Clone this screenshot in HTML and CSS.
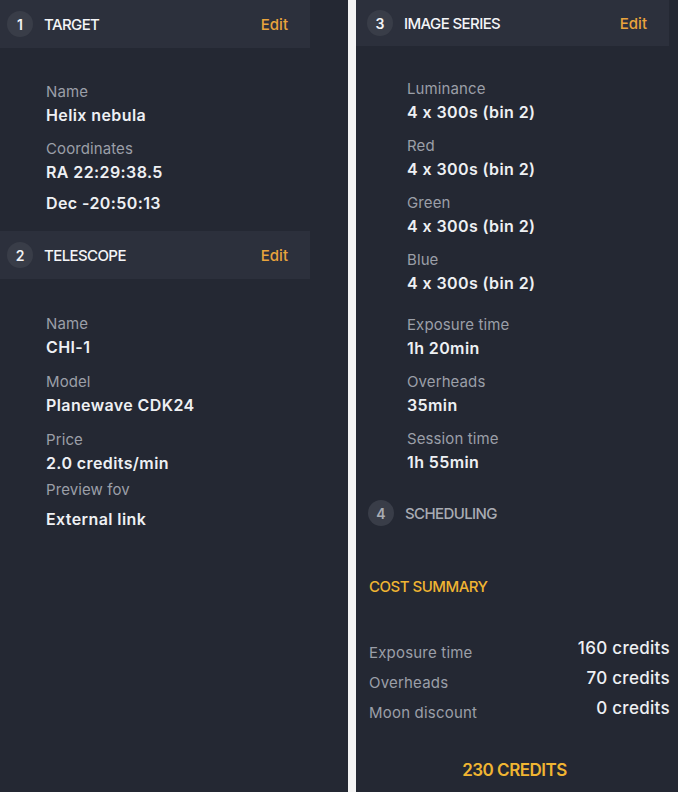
FILE: index.html
```html
<!DOCTYPE html>
<html lang="en">
<head>
  <meta charset="UTF-8" />
  <meta name="viewport" content="width=device-width, initial-scale=1.0"/>
  <title>Observation Request</title>
  <link rel="stylesheet" href="styles.css">
</head>
<body>
  <main class="layout">

    <!-- Left column: target + telescope -->
    <section class="panel">
      <div class="step">
        <header class="step-head">
          <span class="step-num">1</span>
          <span class="step-title">TARGET</span>
          <a class="step-edit" href="#">Edit</a>
        </header>
        <div class="fields">
          <div class="field">
            <div class="label">Name</div>
            <div class="value">Helix nebula</div>
          </div>
          <div class="field">
            <div class="label">Coordinates</div>
            <div class="value">RA 22:29:38.5</div>
            <div class="value value-next">Dec -20:50:13</div>
          </div>
        </div>
      </div>

      <div class="step step-second">
        <header class="step-head">
          <span class="step-num">2</span>
          <span class="step-title">TELESCOPE</span>
          <a class="step-edit" href="#">Edit</a>
        </header>
        <div class="fields">
          <div class="field">
            <div class="label">Name</div>
            <div class="value">CHI-1</div>
          </div>
          <div class="field">
            <div class="label">Model</div>
            <div class="value">Planewave CDK24</div>
          </div>
          <div class="field">
            <div class="label">Price</div>
            <div class="value">2.0 credits/min</div>
          </div>
          <div class="field field-link">
            <div class="label">Preview fov</div>
            <div class="value">External link</div>
          </div>
        </div>
      </div>
    </section>

    <!-- Right column: image series, scheduling, cost -->
    <section class="panel">
      <div class="step">
        <header class="step-head step-head-wide">
          <span class="step-num">3</span>
          <span class="step-title">IMAGE SERIES</span>
          <a class="step-edit" href="#">Edit</a>
        </header>
        <div class="fields fields-series">
          <div class="field">
            <div class="label">Luminance</div>
            <div class="value">4 x 300s (bin 2)</div>
          </div>
          <div class="field">
            <div class="label">Red</div>
            <div class="value">4 x 300s (bin 2)</div>
          </div>
          <div class="field">
            <div class="label">Green</div>
            <div class="value">4 x 300s (bin 2)</div>
          </div>
          <div class="field">
            <div class="label">Blue</div>
            <div class="value">4 x 300s (bin 2)</div>
          </div>
          <div class="field field-group">
            <div class="label">Exposure time</div>
            <div class="value">1h 20min</div>
          </div>
          <div class="field">
            <div class="label">Overheads</div>
            <div class="value">35min</div>
          </div>
          <div class="field">
            <div class="label">Session time</div>
            <div class="value">1h 55min</div>
          </div>
        </div>
      </div>

      <div class="step">
        <header class="step-head step-head-off">
          <span class="step-num">4</span>
          <span class="step-title">SCHEDULING</span>
        </header>
      </div>

      <div class="cost">
        <h3 class="cost-title">COST SUMMARY</h3>
        <div class="cost-row">
          <span class="cost-label">Exposure time</span>
          <span class="cost-value">160 credits</span>
        </div>
        <div class="cost-row">
          <span class="cost-label">Overheads</span>
          <span class="cost-value">70 credits</span>
        </div>
        <div class="cost-row">
          <span class="cost-label">Moon discount</span>
          <span class="cost-value">0 credits</span>
        </div>
        <div class="cost-total">230 CREDITS</div>
      </div>
    </section>

  </main>
</body>
</html>
```

FILE: styles.css
```css
body {
  font-family: Inter, 'Noto Sans', sans-serif;
  font-feature-settings: "calt" 0;
  margin: 0;
  padding: 0;
  background-color: #f4f4f4;
  color: #eef0f3;
  height: 792px;
  overflow: hidden;
}

.layout {
  display: grid;
  grid-template-columns: 348px 322px;
  column-gap: 8px;
  height: 792px;
}

.panel {
  background-color: #242833;
  height: 100%;
}

/* Step headers */
.step-head {
  display: flex;
  align-items: center;
  width: 310px;
  height: 48px;
  padding: 0 22px 0 7px;
  box-sizing: border-box;
  background-color: #2c303c;
}

.step-head-wide {
  width: 313px;
  height: 46px;
  padding-left: 11px;
}

.step-head-off {
  background-color: transparent;
  margin-top: 18px;
  height: 46px;
  padding-left: 12px;
}

.step-num {
  width: 26px;
  height: 26px;
  border-radius: 50%;
  background-color: #393d48;
  display: flex;
  align-items: center;
  justify-content: center;
  font-size: 14px;
  font-weight: 600;
  color: #f2f3f5;
}

.step-title {
  margin-left: 11px;
  font-size: 15px;
  font-weight: 500;
  letter-spacing: -0.6px;
  color: #f4f5f7;
}

.step-edit {
  margin-left: auto;
  font-size: 15px;
  font-weight: 500;
  color: #e9a43c;
  text-decoration: none;
}

.step-head-off .step-num,
.step-head-off .step-title {
  color: #a9acb3;
}

/* Field lists */
.fields {
  padding: 35px 0 0 46px;
}

.fields-series {
  padding-top: 34px;
  padding-left: 51px;
}

.field {
  margin-bottom: 15px;
}

.fields-series .field-group {
  margin-top: 23px;
}

.fields-series .field:last-child {
  margin-bottom: 0;
}

.label {
  font-size: 15px;
  line-height: 18px;
  letter-spacing: 0.1px;
  color: #9b9fa8;
}

.value {
  margin-top: 4px;
  font-size: 16px;
  line-height: 20px;
  font-weight: 600;
  letter-spacing: 0.4px;
}

.value-next {
  margin-top: 11px;
}

.field-link .value {
  margin-top: 10px;
}

.step-second {
  margin-top: 18px;
}

.step-second .fields {
  padding-top: 36px;
}

.step-second .field {
  margin-bottom: 16px;
}

.step-second .field-link {
  margin-top: -8px;
}

/* Cost summary */
.cost {
  padding: 42px 8px 0 13px;
}

.cost-title {
  margin: 0 0 42px;
  font-size: 15px;
  line-height: 18px;
  font-weight: 500;
  letter-spacing: -0.5px;
  color: #f0b532;
}

.cost-row {
  display: flex;
  justify-content: space-between;
  height: 30px;
}

.cost-label {
  margin-top: 5px;
  font-size: 15px;
  line-height: 20px;
  letter-spacing: 0.2px;
  color: #9b9fa8;
}

.cost-value {
  font-size: 17px;
  line-height: 20px;
  font-weight: 500;
  letter-spacing: 0.3px;
}

.cost-total {
  margin: 31px 10px 0 0;
  text-align: center;
  font-size: 17px;
  line-height: 22px;
  font-weight: 600;
  letter-spacing: -0.5px;
  color: #f0b532;
}
```
